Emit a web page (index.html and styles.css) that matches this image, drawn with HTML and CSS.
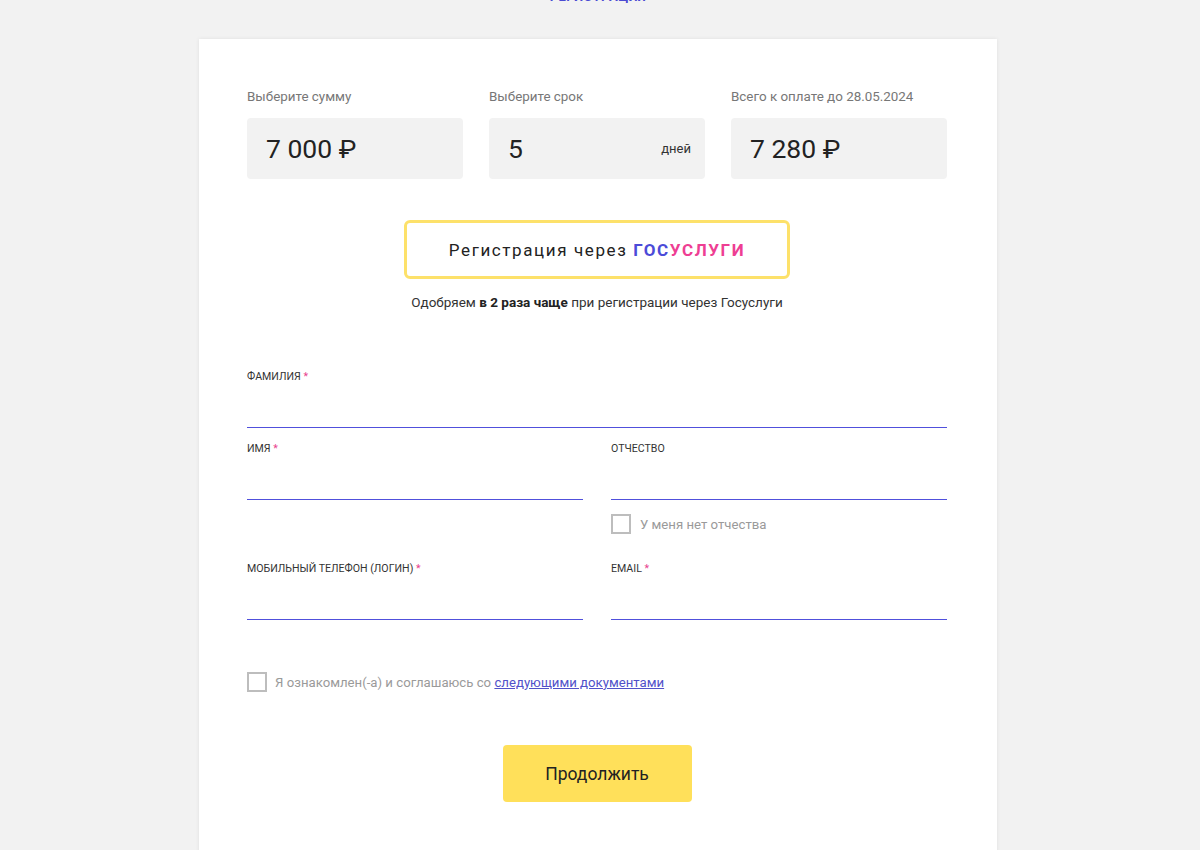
FILE: index.html
```html
<!DOCTYPE html>
<html lang="ru">
<head>
<meta charset="utf-8">
<title>Регистрация</title>
<link rel="stylesheet" href="styles.css">
</head>
<body>
<div class="top-link">Регистрация</div>
<main class="card">
  <section class="calc">
    <div class="calc-item">
      <div class="calc-label">Выберите сумму</div>
      <div class="calc-box"><span class="calc-value">7 000 ₽</span></div>
    </div>
    <div class="calc-item">
      <div class="calc-label">Выберите срок</div>
      <div class="calc-box"><span class="calc-value">5</span><span class="calc-unit">дней</span></div>
    </div>
    <div class="calc-item">
      <div class="calc-label">Всего к оплате до 28.05.2024</div>
      <div class="calc-box"><span class="calc-value">7 280 ₽</span></div>
    </div>
  </section>

  <div class="gos-wrap">
    <button class="gos-btn">Регистрация через <b class="gos-blue">ГОС</b><b class="gos-pink">УСЛУГИ</b></button>
    <p class="gos-note">Одобряем <b>в 2 раза чаще</b> при регистрации через Госуслуги</p>
  </div>

  <form class="form">
    <div class="field field-full">
      <label class="field-label">Фамилия <span class="req">*</span></label>
      <div class="field-input"></div>
    </div>
    <div class="row">
      <div class="field">
        <label class="field-label">Имя <span class="req">*</span></label>
        <div class="field-input"></div>
      </div>
      <div class="field">
        <label class="field-label">Отчество</label>
        <div class="field-input"></div>
        <div class="check-row"><span class="checkbox"></span><span class="check-text">У меня нет отчества</span></div>
      </div>
    </div>
    <div class="row row-3">
      <div class="field">
        <label class="field-label">Мобильный телефон (логин) <span class="req">*</span></label>
        <div class="field-input"></div>
      </div>
      <div class="field">
        <label class="field-label">Email <span class="req">*</span></label>
        <div class="field-input"></div>
      </div>
    </div>
    <div class="agree"><span class="checkbox"></span><span class="check-text">Я ознакомлен(-а) и соглашаюсь со <a class="doc-link" href="#">следующими документами</a></span></div>
    <div class="submit-wrap"><button type="button" class="submit">Продолжить</button></div>
  </form>
</main>
</body>
</html>
```
FILE: styles.css
```css
* { box-sizing: border-box; }
html, body { margin: 0; padding: 0; }
body {
  background: #f2f2f2;
  font-family: Roboto, "Liberation Sans", Arial, sans-serif;
  color: #222;
  height: 850px;
  overflow: hidden;
  padding-right: 4px;
}
.top-link {
  text-align: center;
  color: #4b4bd2;
  font-size: 13px;
  font-weight: 700;
  text-transform: uppercase;
  line-height: 16px;
  height: 16px;
  margin-top: -11px;
  letter-spacing: 0.5px;
}
.card {
  width: 798px;
  margin: 34px auto 0;
  background: #fff;
  box-shadow: 0 0 4px rgba(0,0,0,0.08);
  padding: 49px 50px 60px 48px;
  min-height: 900px;
}
.calc {
  display: grid;
  grid-template-columns: 216px 216px 216px;
  column-gap: 26px;
}
.calc-label {
  font-size: 13.4px;
  line-height: 17px;
  color: #777;
  margin-bottom: 13px;
}
.calc-box {
  height: 61px;
  background: #f2f2f2;
  border-radius: 4px;
  display: flex;
  align-items: center;
  justify-content: space-between;
  padding: 0 14px 0 19px;
}
.calc-value {
  font-size: 26.5px;
  color: #222;
}
.calc-unit {
  font-size: 13px;
  color: #333;
}
.gos-wrap {
  display: flex;
  flex-direction: column;
  align-items: center;
  margin-top: 41px;
}
.gos-btn {
  width: 386px;
  height: 59px;
  border: 3px solid #fde16a;
  border-radius: 6px;
  background: #fff;
  font-family: inherit;
  font-size: 17px;
  letter-spacing: 1.6px;
  color: #222;
  padding: 0;
}
.gos-blue { color: #4b4bd8; font-weight: 700; }
.gos-pink { color: #ee3e93; font-weight: 700; }
.gos-note {
  margin: 15px 0 0;
  font-size: 13.5px;
  line-height: 16px;
  color: #333;
}
.gos-note b { color: #222; }
.form { margin-top: 61px; }
.row {
  display: grid;
  grid-template-columns: 336px 336px;
  column-gap: 28px;
  margin-top: 15px;
}
.row-3 { margin-top: 29px; }
.field-label {
  display: block;
  font-size: 10.6px;
  line-height: 12px;
  text-transform: uppercase;
  color: #333;
}
.req { color: #e8428e; }
.field-input {
  height: 45px;
  border-bottom: 1px solid #5050dc;
}
.check-row {
  display: flex;
  align-items: center;
  gap: 9px;
  margin-top: 14px;
}
.checkbox {
  width: 20px;
  height: 20px;
  border: 2px solid #bdbdbd;
  display: inline-block;
  flex: none;
}
.check-text {
  font-size: 13.2px;
  color: #9a9a9a;
}
.agree {
  display: flex;
  align-items: center;
  gap: 8px;
  margin-top: 52px;
}
.doc-link { color: #5151c9; text-decoration: underline; }
.submit-wrap {
  display: flex;
  justify-content: center;
  margin-top: 53px;
}
.submit {
  width: 189px;
  height: 57px;
  background: #ffe05a;
  border: none;
  border-radius: 4px;
  font-family: inherit;
  font-size: 17.5px;
  color: #222;
  font-weight: 400;
}
```
